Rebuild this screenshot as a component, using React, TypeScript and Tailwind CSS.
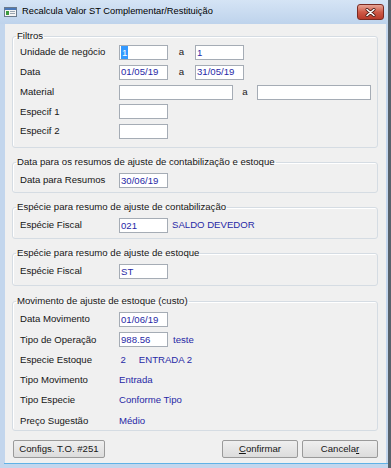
import React from "react";

const Input = ({ w, children }: { w: string; children?: React.ReactNode }) => (
  <div
    className={`${w} h-[15px] shrink-0 border border-[#a5acb5] bg-white flex items-center pl-[1px] text-[#2828a6] leading-none`}
  >
    {children}
  </div>
);

const Row = ({ label, children }: { label: string; children?: React.ReactNode }) => (
  <div className="flex items-center h-[15px]">
    <span className="w-[99px] shrink-0 text-[#161616]">{label}</span>
    {children}
  </div>
);

const Group = ({
  title,
  className,
  children,
}: {
  title: string;
  className?: string;
  children: React.ReactNode;
}) => (
  <fieldset
    className={`border border-[#d5dce3] rounded-[3px] shadow-[inset_1px_1px_0_#fff] ${className ?? ""}`}
  >
    <legend className="ml-[3px] px-[1px] leading-[12px] text-[#161616]">{title}</legend>
    {children}
  </fieldset>
);

export default function App() {
  return (
    <div className="w-[391px] h-[468px] flex bg-[#58626c] font-['Liberation_Sans',Arial,sans-serif] text-[9.6px]">
      <div className="w-[388px] h-[468px] flex flex-col bg-[#c3d6ed]">
        {/* Title bar */}
        <div className="h-[24px] shrink-0 flex items-center bg-gradient-to-b from-[#d5e4f5] to-[#bed3ec] pl-[4px] pr-[4px]">
          <svg width="13" height="10" viewBox="0 0 13 10" className="shrink-0">
            <rect x="0.5" y="0.5" width="12" height="9" fill="#f4f4f4" stroke="#6a7a8c" />
            <rect x="1" y="1" width="11" height="2" fill="#4a78b8" />
            <rect x="2" y="4" width="3" height="4" fill="#3c9a3c" />
            <rect x="6" y="4" width="5" height="1" fill="#9aa6b2" />
            <rect x="6" y="6" width="5" height="1" fill="#9aa6b2" />
          </svg>
          <span className="ml-[5px] text-[9.3px] text-black">
            Recalcula Valor ST Complementar/Restituição
          </span>
          <div className="ml-auto w-[27px] h-[16px] rounded-[3px] border border-[#7a2a22] bg-gradient-to-b from-[#e6a597] via-[#cf5a48] to-[#b83a2a] flex items-center justify-center">
            <svg width="11" height="9" viewBox="0 0 11 9">
              <path d="M2 1.5 L9 7.5 M9 1.5 L2 7.5" stroke="#4a1a14" strokeWidth="3" strokeLinecap="round" />
              <path d="M2 1.5 L9 7.5 M9 1.5 L2 7.5" stroke="#ffffff" strokeWidth="1.6" strokeLinecap="round" />
            </svg>
          </div>
        </div>

        {/* Client area */}
        <div className="ml-[5px] mr-[2px] h-[439px] shrink-0 bg-[#f0f0f0] pl-[7px] pr-[8px] pt-[6px] flex flex-col">
          <Group title="Filtros">
            <div className="pl-[7px] pt-[3px] pb-[8px] flex flex-col gap-[4.75px]">
              <Row label="Unidade de negócio">
                <Input w="w-[49px]">
                  <span className="h-[13px] flex items-center bg-[#3399ff] text-white px-[1px]">1</span>
                </Input>
                <span className="w-[27px] text-center text-[#161616]">a</span>
                <Input w="w-[49px]">1</Input>
              </Row>
              <Row label="Data">
                <Input w="w-[49px]">01/05/19</Input>
                <span className="w-[27px] text-center text-[#161616]">a</span>
                <Input w="w-[49px]">31/05/19</Input>
              </Row>
              <Row label="Material">
                <Input w="w-[114px]" />
                <span className="w-[24px] text-center text-[#161616]">a</span>
                <Input w="w-[114px]" />
              </Row>
              <Row label="Especif 1">
                <Input w="w-[49px]" />
              </Row>
              <Row label="Especif 2">
                <Input w="w-[49px]" />
              </Row>
            </div>
          </Group>

          <Group title="Data para os resumos de ajuste de contabilização e estoque" className="mt-[8px]">
            <div className="pl-[7px] pt-[5px] pb-[4px]">
              <Row label="Data para Resumos">
                <Input w="w-[49px]">30/06/19</Input>
              </Row>
            </div>
          </Group>

          <Group title="Espécie para resumo de ajuste de contabilização" className="mt-[8px]">
            <div className="pl-[7px] pt-[5px] pb-[5px]">
              <Row label="Espécie Fiscal">
                <Input w="w-[49px]">021</Input>
                <span className="ml-[4px] text-[#2828a6]">SALDO DEVEDOR</span>
              </Row>
            </div>
          </Group>

          <Group title="Espécie para resumo de ajuste de estoque" className="mt-[8px]">
            <div className="pl-[7px] pt-[5px] pb-[6px]">
              <Row label="Espécie Fiscal">
                <Input w="w-[49px]">ST</Input>
              </Row>
            </div>
          </Group>

          <Group title="Movimento de ajuste de estoque (custo)" className="mt-[9px]">
            <div className="pl-[7px] pt-[5px] pb-[2px] flex flex-col gap-[5.25px]">
              <Row label="Data Movimento">
                <Input w="w-[49px]">01/06/19</Input>
              </Row>
              <Row label="Tipo de Operação">
                <Input w="w-[49px]">988.56</Input>
                <span className="ml-[5px] text-[#2828a6]">teste</span>
              </Row>
              <Row label="Especie Estoque">
                <span className="pl-[1.5px] text-[#2828a6]">2</span>
                <span className="ml-[13px] text-[#2828a6]">ENTRADA 2</span>
              </Row>
              <Row label="Tipo Movimento">
                <span className="text-[#2828a6]">Entrada</span>
              </Row>
              <Row label="Tipo Especie">
                <span className="text-[#2828a6]">Conforme Tipo</span>
              </Row>
              <Row label="Preço Sugestão">
                <span className="text-[#2828a6]">Médio</span>
              </Row>
            </div>
          </Group>

          <div className="mt-[9px] flex items-center justify-between pl-[1px]">
            <button className="w-[92px] h-[18px] rounded-[2px] border border-[#9a9a9a] bg-gradient-to-b from-[#efefef] to-[#dcdcdc] text-[#161616]">
              Configs. T.O. #251
            </button>
            <div className="flex gap-[4px]">
              <button className="w-[76px] h-[18px] rounded-[2px] border border-[#9a9a9a] bg-gradient-to-b from-[#efefef] to-[#dcdcdc] text-[#161616]">
                <span className="underline">C</span>onfirmar
              </button>
              <button className="w-[76px] h-[18px] rounded-[2px] border border-[#9a9a9a] bg-gradient-to-b from-[#efefef] to-[#dcdcdc] text-[#161616]">
                Cancela<span className="underline">r</span>
              </button>
            </div>
          </div>
        </div>
        <div className="ml-[4px] h-[1px] bg-[#5fb2e6]" />
      </div>
    </div>
  );
}
